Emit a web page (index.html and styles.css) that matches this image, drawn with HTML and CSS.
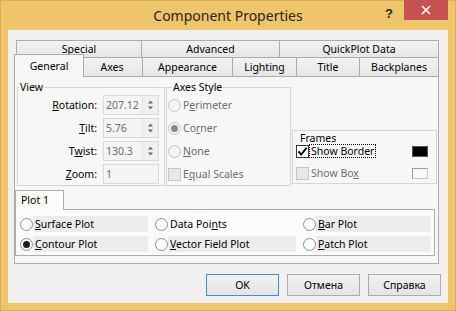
FILE: index.html
```html
<!DOCTYPE html>
<html lang="en">
<head>
    <meta charset="UTF-8">
    <title>Component Properties</title>
    <link rel="stylesheet" href="styles.css">
</head>
<body>
<div class="window">
    <div class="titlebar">
        <div></div>
        <div class="title">Component Properties</div>
        <div class="caption-buttons">
            <span class="help">?</span>
            <span class="close">
                <svg width="10" height="10" viewBox="0 0 10 10"><path d="M1 1 L9 9 M9 1 L1 9" stroke="#fff" stroke-width="1.7"/></svg>
            </span>
        </div>
    </div>

    <div class="client">
        <div class="tabs">
            <div class="tab-row back">
                <div class="tab w-special">Special</div>
                <div class="tab w-advanced">Advanced</div>
                <div class="tab w-quick">QuickPlot Data</div>
            </div>
            <div class="tab-row front">
                <div class="tab selected w-general">General</div>
                <div class="tab w-axes">Axes</div>
                <div class="tab w-appearance">Appearance</div>
                <div class="tab w-lighting">Lighting</div>
                <div class="tab w-title">Title</div>
                <div class="tab w-backplanes">Backplanes</div>
            </div>

            <div class="page">
                <div class="groups">
                    <div class="group view">
                        <div class="legend">View</div>
                        <div class="view-rows">
                            <label><u>R</u>otation:</label>
                            <div class="field">
                                <span class="value">207.12</span>
                                <span class="spin">
                                    <svg width="15" height="18" viewBox="0 0 15 18"><path d="M5 7.5 H10 L7.5 4.5 Z M5 10.5 H10 L7.5 13.5 Z" fill="#6a6a6a"/></svg>
                                </span>
                            </div>
                            <label><u>T</u>ilt:</label>
                            <div class="field">
                                <span class="value">5.76</span>
                                <span class="spin">
                                    <svg width="15" height="18" viewBox="0 0 15 18"><path d="M5 7.5 H10 L7.5 4.5 Z M5 10.5 H10 L7.5 13.5 Z" fill="#6a6a6a"/></svg>
                                </span>
                            </div>
                            <label>T<u>w</u>ist:</label>
                            <div class="field">
                                <span class="value">130.3</span>
                                <span class="spin">
                                    <svg width="15" height="18" viewBox="0 0 15 18"><path d="M5 7.5 H10 L7.5 4.5 Z M5 10.5 H10 L7.5 13.5 Z" fill="#6a6a6a"/></svg>
                                </span>
                            </div>
                            <label><u>Z</u>oom:</label>
                            <div class="field">
                                <span class="value">1</span>
                            </div>
                        </div>
                    </div>

                    <div class="group axes-style">
                        <div class="legend">Axes Style</div>
                        <div class="option-rows">
                            <div class="option disabled"><span class="radio"></span><span>P<u>e</u>rimeter</span></div>
                            <div class="option disabled"><span class="radio on"></span><span>Co<u>r</u>ner</span></div>
                            <div class="option disabled"><span class="radio"></span><span><u>N</u>one</span></div>
                            <div class="option disabled"><span class="check"></span><span>E<u>q</u>ual Scales</span></div>
                        </div>
                    </div>

                    <div class="group frames">
                        <div class="frames-title">Frames</div>
                        <div class="frame-row">
                            <span class="check on">
                                <svg width="11" height="11" viewBox="0 0 11 11"><path d="M1.5 5.5 L4.2 8.5 L9.5 1.8" fill="none" stroke="#000" stroke-width="1.9"/></svg>
                            </span>
                            <span class="focus">Show Border</span>
                            <span class="swatch black"></span>
                        </div>
                        <div class="frame-row second disabled">
                            <span class="check"></span>
                            <span class="plain-label">Show Bo<u>x</u></span>
                            <span class="swatch empty"></span>
                        </div>
                    </div>
                </div>

                <div class="subtab">Plot 1</div>
                <div class="subpage">
                    <div class="plot"><span class="radio"></span><span class="stripe"><u>S</u>urface Plot</span></div>
                    <div class="plot"><span class="radio"></span><span class="stripe clear">Data Poi<u>n</u>ts</span></div>
                    <div class="plot"><span class="radio"></span><span class="stripe"><u>B</u>ar Plot</span></div>
                    <div class="plot"><span class="radio on"></span><span class="stripe"><u>C</u>ontour Plot</span></div>
                    <div class="plot"><span class="radio"></span><span class="stripe"><u>V</u>ector Field Plot</span></div>
                    <div class="plot"><span class="radio"></span><span class="stripe"><u>P</u>atch Plot</span></div>
                </div>
            </div>
        </div>

        <div class="buttons">
            <div class="button default">OK</div>
            <div class="button">Отмена</div>
            <div class="button">Справка</div>
        </div>
    </div>
</div>
</body>
</html>
```

FILE: styles.css
```css
:root {
    --frame: #efc56b;
    --tab-border: #acacac;
    --page-bg: #f7f7f7;
    --sub-bg: #fbfbfb;
    --disabled: #6d6d6d;
}

* {
    box-sizing: border-box;
}

body {
    margin: 0;
    font-family: "Noto Sans", "Liberation Sans", sans-serif;
    font-size: 10.5px;
    color: #000;
}

u {
    text-decoration: underline;
    text-underline-offset: 1px;
}

.window {
    width: 456px;
    height: 311px;
    background: var(--frame);
    border: 1px solid #d8ad55;
    display: flex;
    flex-direction: column;
}

/* title bar */
.titlebar {
    height: 29px;
    display: grid;
    grid-template-columns: 1fr auto 1fr;
    align-items: center;
}

.title {
    font-size: 14px;
    color: #2b2414;
}

.caption-buttons {
    justify-self: end;
    align-self: start;
    display: flex;
    margin-top: -1px;
    margin-right: 7px;
}

.help {
    font-family: "Liberation Sans", sans-serif;
    font-weight: bold;
    font-size: 13px;
    color: #2b2414;
    margin-top: 6px;
    margin-right: 11px;
}

.close {
    width: 44px;
    height: 20px;
    background: #c75050;
    display: flex;
    align-items: center;
    justify-content: center;
}

/* client area */
.client {
    margin: 0 7px;
    height: 273px;
    background: #f0f0f0;
    padding: 10px 0 0 6px;
}

.tabs {
    width: 425px;
}

.tab-row {
    display: flex;
    margin-left: 2px;
}

.tab-row.back {
    height: 17px;
}

.tab-row.front {
    height: 19px;
}

.tab {
    border: 1px solid var(--tab-border);
    border-bottom: none;
    background: linear-gradient(#f2f2f2, #e6e6e6);
    text-align: center;
    margin-left: -1px;
    line-height: 16px;
}

.tab:first-child {
    margin-left: 0;
}

.front .tab {
    height: 19px;
    line-height: 19px;
}

.front .tab.selected {
    position: relative;
    z-index: 2;
    height: 23px;
    margin: -3px -2px 0 -2px;
    background: var(--page-bg);
    line-height: 22px;
}

.w-special { width: 126px; }
.w-advanced { width: 139px; }
.w-quick { width: 160px; }
.w-general { width: 70px; }
.w-axes { width: 62px; }
.w-appearance { width: 91px; }
.w-lighting { width: 65px; }
.w-title { width: 64px; }
.w-backplanes { width: 80px; }

.page {
    height: 188px;
    border: 1px solid var(--tab-border);
    background: var(--page-bg);
}

.groups {
    display: flex;
    align-items: flex-start;
    margin: 10px 0 0 2px;
}

.group {
    border: 1px solid #d5d5d5;
}

.legend {
    display: table;
    margin: -7px 0 0 1px;
    padding: 0 1px;
    line-height: 13px;
    background: var(--page-bg);
}

.view {
    width: 148px;
    height: 99px;
}

.view-rows {
    display: grid;
    grid-template-columns: 79px 56px;
    grid-auto-rows: 20px;
    column-gap: 6px;
    row-gap: 3px;
    margin-top: 1px;
}

.view-rows label {
    text-align: right;
    line-height: 20px;
}

.field {
    display: flex;
    border: 1px solid #d9d9d9;
    background: #f4f4f4;
}

.value {
    flex: 1;
    padding-left: 2px;
    line-height: 18px;
    color: var(--disabled);
}

.spin {
    width: 16px;
    border-left: 1px solid #e2e2e2;
    background: #f0f0f0;
}

.spin svg {
    display: block;
}

.axes-style {
    width: 125px;
    height: 99px;
    margin-left: 1px;
}

.axes-style .legend {
    margin-left: 5px;
}

.option-rows {
    display: grid;
    grid-auto-rows: 20px;
    row-gap: 3px;
    margin-top: 1px;
    padding-left: 1px;
}

.option {
    display: flex;
    align-items: center;
    gap: 2px;
}

.disabled {
    color: var(--disabled);
}

/* radio and check boxes */
.radio {
    width: 13px;
    height: 13px;
    flex: none;
    border-radius: 50%;
    border: 1px solid #8e8e8e;
    background: #fff;
    display: flex;
    align-items: center;
    justify-content: center;
}

.radio.on::after {
    content: "";
    width: 7px;
    height: 7px;
    border-radius: 50%;
    background: #1e1e1e;
}

.disabled .radio {
    border-color: #c4c4c4;
    background: #f4f4f4;
}

.disabled .radio.on::after {
    background: #8a8a8a;
}

.check {
    width: 13px;
    height: 13px;
    flex: none;
    border: 1px solid #c4c4c4;
    background: #e8e8e8;
}

.check.on {
    border-color: #333;
    background: #fff;
}

.check svg {
    display: block;
}

.frames {
    width: 145px;
    height: 54px;
    margin: 43px 0 0 1px;
    padding: 0 8px 0 3px;
}

.frames-title {
    line-height: 12px;
    margin-top: 1px;
    padding-left: 4px;
}

.frame-row {
    height: 14px;
    display: flex;
    align-items: center;
}

.frame-row.second {
    margin-top: 8px;
}

.focus {
    margin-left: 1px;
    padding: 0 1px;
    line-height: 12px;
    outline: 1px dotted #000;
}

.plain-label {
    margin-left: 2px;
}

.swatch {
    margin-left: auto;
    width: 16px;
    height: 11px;
}

.swatch.black {
    background: #000;
    border: 1px solid #555;
}

.swatch.empty {
    border: 1px solid #c8c8c8;
    border-top-color: #9a9a9a;
    border-left-color: #9a9a9a;
}

/* plot sub-tabs */
.subtab {
    position: relative;
    z-index: 1;
    width: 49px;
    height: 20px;
    margin-top: 4px;
    border: 1px solid var(--tab-border);
    border-bottom: none;
    background: var(--sub-bg);
    padding-left: 5px;
    line-height: 19px;
}

.subpage {
    width: 420px;
    height: 47px;
    margin-top: -1px;
    border: 1px solid var(--tab-border);
    background: var(--sub-bg);
    padding: 6px 0 0 4px;
    display: grid;
    grid-template-columns: 135px 148px 128px;
    grid-auto-rows: 16px;
    row-gap: 4px;
}

.plot {
    display: flex;
    align-items: center;
}

.stripe {
    flex: 1;
    height: 16px;
    line-height: 16px;
    margin-right: 7px;
    padding-left: 2px;
    background: #ececec;
}

.stripe.clear {
    background: none;
}

.plot:nth-child(3n) .stripe {
    margin-right: 0;
}

/* dialog buttons */
.buttons {
    display: flex;
    justify-content: flex-end;
    gap: 8px;
    margin-top: 10px;
    padding-right: 7px;
}

.button {
    width: 73px;
    height: 22px;
    border: 1px solid var(--tab-border);
    background: linear-gradient(#f1f1f1, #e4e4e4);
    text-align: center;
    line-height: 20px;
}

.button.default {
    border-color: #3c8fd8;
}
```
